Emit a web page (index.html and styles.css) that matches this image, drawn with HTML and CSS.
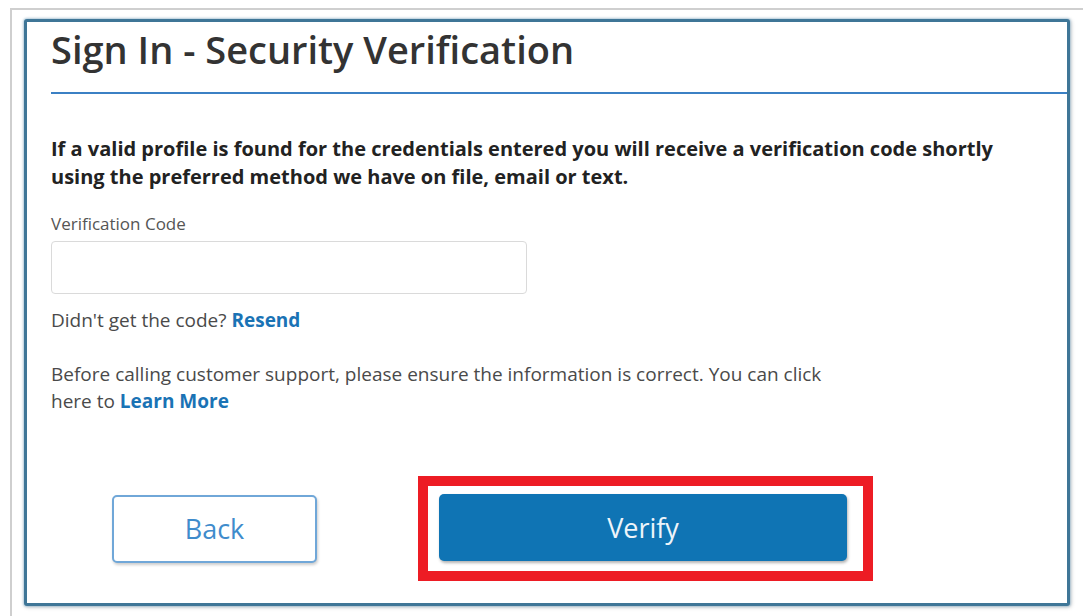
FILE: index.html
```html
<!DOCTYPE html>
<html lang="en">
<head>
<meta charset="utf-8">
<title>Sign In - Security Verification</title>
<link rel="stylesheet" href="styles.css">
</head>
<body>
<div class="frame">
  <section class="card">
    <header class="card-head">
      <h1 class="title">Sign In - Security Verification</h1>
    </header>
    <div class="card-body">
      <p class="intro">If a valid profile is found for the credentials entered you will receive a verification code shortly using the preferred method we have on file, email or text.</p>
      <label class="field-label" for="code">Verification Code</label>
      <input class="field-input" id="code" type="text">
      <p class="resend">Didn't get the code? <a class="link" href="#">Resend</a></p>
      <p class="support">Before calling customer support, please ensure the information is correct. You can click<br>here to <a class="link" href="#">Learn More</a></p>
      <div class="actions">
        <button class="btn btn-back" type="button">Back</button>
        <div class="highlight">
          <button class="btn btn-verify" type="button">Verify</button>
        </div>
      </div>
    </div>
  </section>
</div>
</body>
</html>
```

FILE: styles.css
```css
html, body {
  margin: 0;
  padding: 0;
  background: #ffffff;
  font-family: "Open Sans", "Liberation Sans", Arial, sans-serif;
  overflow: hidden;
}

.frame {
  margin: 8px 0 0 10px;
  height: 620px;
  border-top: 2px solid #cfcfcf;
  border-left: 2px solid #cfcfcf;
  padding: 9px 0 0 12px;
}

.card {
  width: 1046px;
  height: 587px;
  box-sizing: border-box;
  border: 3px solid #3f7697;
  border-radius: 3px;
  box-shadow: 0 0 2px 1px rgba(120, 170, 205, 0.45), 1px 1px 4px rgba(0, 0, 0, 0.25);
  background: #ffffff;
}

.card-head {
  margin-left: 24px;
  padding-top: 4px;
  height: 66px;
  border-bottom: 2px solid #3b80c4;
}

.title {
  margin: 0;
  font-size: 38px;
  line-height: 46px;
  font-weight: 600;
  color: #333333;
}

.card-body {
  padding-left: 24px;
  display: flex;
  flex-direction: column;
  align-items: flex-start;
}

.intro {
  margin: 41px 0 0;
  width: 980px;
  font-size: 20px;
  line-height: 28px;
  font-weight: 700;
  color: #222222;
}

.field-label {
  margin-top: 23px;
  font-size: 17px;
  line-height: 20px;
  color: #555555;
}

.field-input {
  margin-top: 7px;
  width: 476px;
  height: 53px;
  box-sizing: border-box;
  border: 1px solid #dadada;
  border-radius: 4px;
  background: #ffffff;
  outline: none;
}

.resend {
  margin: 14px 0 0;
  font-size: 19px;
  line-height: 24px;
  color: #4a4a4a;
}

.support {
  margin: 29px 0 0;
  font-size: 19px;
  line-height: 27px;
  color: #4a4a4a;
}

.link {
  color: #1a73b5;
  font-weight: 700;
  text-decoration: none;
}

.actions {
  margin-top: 61px;
  margin-left: 61px;
  display: flex;
  align-items: center;
  gap: 101px;
}

.btn {
  font-family: "Open Sans", "Liberation Sans", Arial, sans-serif;
  font-size: 27px;
  border-radius: 5px;
  cursor: pointer;
}

.btn-back {
  width: 205px;
  height: 68px;
  background: #ffffff;
  border: 2px solid #70a7d8;
  color: #3f8ccc;
  box-shadow: 1px 2px 3px rgba(0, 0, 0, 0.2);
}

.highlight {
  border: 10px solid #ed1c24;
  padding: 8px 16px 10px 11px;
}

.btn-verify {
  display: block;
  width: 408px;
  height: 67px;
  border: none;
  background: #0f74b4;
  color: #eef4fa;
  box-shadow: 1px 2px 3px rgba(0, 0, 0, 0.3);
}
```
